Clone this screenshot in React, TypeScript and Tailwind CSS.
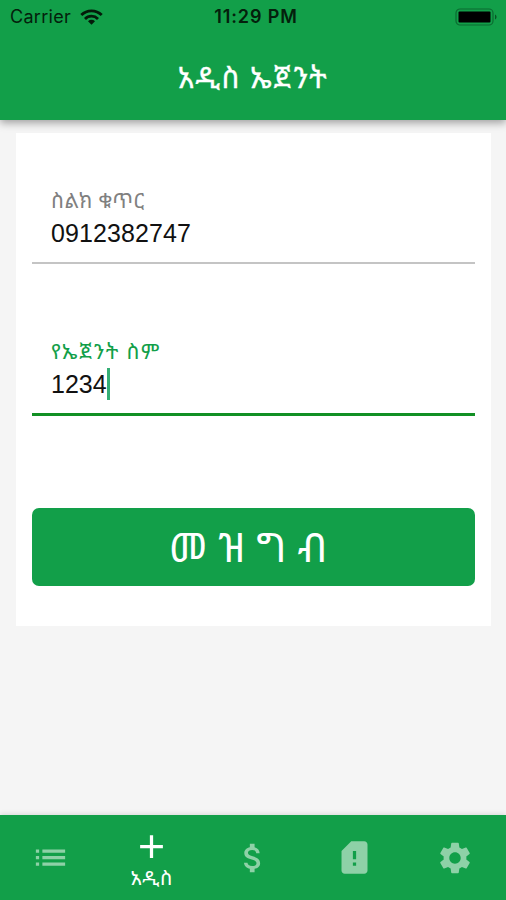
import { MdAdd, MdAttachMoney, MdList, MdSdCardAlert, MdSettings } from 'react-icons/md'

const ETHIOPIC = "font-['Noto_Sans_Ethiopic','Noto_Sans','DejaVu_Sans',sans-serif]"

function StatusBar() {
  return (
    <div className="grid h-[34px] grid-cols-3 items-center pl-2.5 pr-2 text-[#04200c] font-['Inter',sans-serif]">
      <div className="flex items-center gap-[9px]">
        <span className="text-[18px] leading-8 tracking-[0.3px]">Carrier</span>
        <svg className="h-4 w-[23px]" viewBox="0 0 23 16" fill="none" stroke="#041b0a" strokeWidth="2.8">
          <path d="M1.3 6.1a14.4 14.4 0 0 1 20.4 0" />
          <path d="M5 9.9a9.2 9.2 0 0 1 13 0" />
          <path d="M11.5 15.7 8 12.2a5 5 0 0 1 7 0z" fill="#041b0a" stroke="none" />
        </svg>
      </div>
      <span className="whitespace-nowrap pl-1 text-center text-[18px] font-semibold leading-8 tracking-[0.9px]">11:29 PM</span>
      <svg className="h-[18px] w-[43px] justify-self-end" viewBox="0 0 43 18">
        <rect x="1" y="1" width="37" height="16" rx="4" fill="none" stroke="#0b6b31" strokeWidth="1.2" />
        <rect x="3.5" y="3.5" width="32" height="11" rx="1" fill="#000" />
        <path d="M40 6.5c2 .8 2 4.2 0 5z" fill="#0b5226" />
      </svg>
    </div>
  )
}

export default function App() {
  return (
    <main className="flex h-[900px] w-[506px] flex-col overflow-hidden bg-[#f5f5f5]">
      <header className="relative z-10 h-[120px] shrink-0 bg-[#129f49] shadow-[0_3px_8px_rgba(0,0,0,0.35)]">
        <StatusBar />
        <h1 className={`pt-[23px] text-center text-[29px] leading-10 tracking-[1.5px] text-white [-webkit-text-stroke:0.3px_white] ${ETHIOPIC}`}>አዲስ ኤጀንት</h1>
      </header>

      <section className="mx-4 mt-[13px] h-[493px] w-[475px] shrink-0 bg-white px-4 pt-[51px]">
        <div className="h-20 border-b-2 border-[#c4c4c4] pl-[19px]">
          <label className={`block h-8 text-[21px] leading-8 tracking-[0.3px] text-[#808080] ${ETHIOPIC}`}>ስልክ ቁጥር</label>
          <div className="text-[25px] leading-[34px] tracking-[0.1px] text-[#111] font-['Liberation_Sans',sans-serif]">0912382747</div>
        </div>

        <div className="mt-[71px] h-[81px] border-b-[3px] border-[#129024] pl-[19px]">
          <label className={`block h-8 text-[21px] leading-8 tracking-[1.4px] text-[#129f49] ${ETHIOPIC}`}>የኤጀንት ስም</label>
          <div className="flex items-center text-[25px] leading-[34px] text-[#111] font-['Liberation_Sans',sans-serif]">
            1234
            <span className="h-8 w-[3px] bg-[#35ae75]" />
          </div>
        </div>

        <button className={`mt-[92px] block h-[78px] w-full rounded-[7px] bg-[#129f49] text-[40px] leading-[76px] tracking-[11px] text-white ${ETHIOPIC}`}>
          መዝግብ
        </button>
      </section>

      <nav className="mt-auto grid h-[85px] shrink-0 grid-cols-5 bg-[#129f49] text-[#8ed1a7] shadow-[0_-1px_5px_rgba(0,0,0,0.12)]">
        <div className="flex items-center justify-center">
          <MdList size={39} />
        </div>
        <div className="flex flex-col items-center pt-3 text-white">
          <MdAdd size={39} />
          <span className={`text-[20px] leading-6 tracking-[0.7px] ${ETHIOPIC}`}>አዲስ</span>
        </div>
        <div className="flex items-center justify-center">
          <MdAttachMoney size={38} />
        </div>
        <div className="flex items-center justify-center">
          <MdSdCardAlert size={39} />
        </div>
        <div className="flex items-center justify-center">
          <MdSettings size={38} />
        </div>
      </nav>
    </main>
  )
}
